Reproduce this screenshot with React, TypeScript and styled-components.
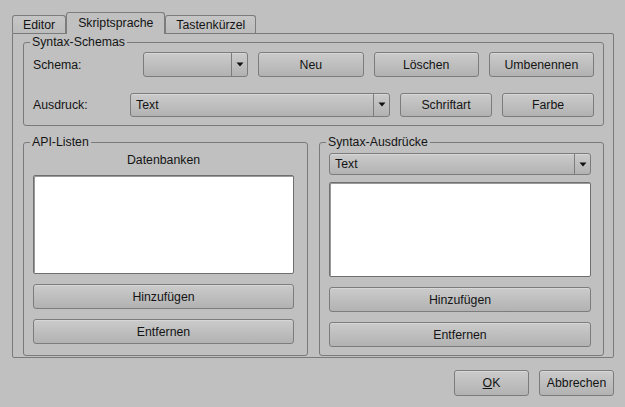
import React from 'react';
import styled, { createGlobalStyle, css } from 'styled-components';

const Global = createGlobalStyle`
  html, body { margin: 0; padding: 0; background: #c0c0c0; }
  body {
    font-family: "Liberation Sans", Arial, sans-serif;
    font-size: 12.3px;
    color: #141414;
  }
  #root { width: 625px; height: 407px; }
  * { box-sizing: border-box; }
`;

const Dialog = styled.div`
  width: 625px;
  height: 407px;
  padding: 12px 11px 0 12px;
  display: flex;
  flex-direction: column;
`;

const TabBar = styled.div`
  display: flex;
  align-items: flex-end;
  height: 21px;
  position: relative;
  z-index: 1;
`;

const Tab = styled.div<{ $active?: boolean }>`
  display: flex;
  align-items: center;
  justify-content: center;
  border: 1px solid #7c7c7c;
  border-bottom: none;
  border-radius: 3px 3px 0 0;
  white-space: nowrap;
  ${(p) =>
    p.$active
      ? css`
          height: 22px;
          margin-bottom: -1px;
          padding: 0 11px 2px;
          background: #c0c0c0;
        `
      : css`
          height: 18px;
          padding: 0 10px;
          background: linear-gradient(#c6c6c6, #bcbcbc);
        `}
`;

const Pane = styled.div`
  border: 1px solid #7a7a7a;
  border-radius: 0 2px 2px 2px;
  padding: 8px 9px 1px 10px;
  display: flex;
  flex-direction: column;
`;

const Group = styled.div`
  position: relative;
  border: 1px solid #7a7a7a;
  border-radius: 3px;
`;

const Legend = styled.span`
  position: absolute;
  top: -8px;
  left: 6px;
  padding: 0 2px;
  line-height: 14px;
  background: #c0c0c0;
  white-space: nowrap;
`;

const SchemaGroup = styled(Group)`
  padding: 9px 9px 8px 9px;
  display: flex;
  flex-direction: column;
  gap: 15px;
`;

const SchemaRow = styled.div`
  display: grid;
  grid-template-columns: 100px repeat(4, 1fr);
  column-gap: 10px;
  height: 25px;
  align-items: center;
`;

const StyleRow = styled.div`
  display: flex;
  align-items: center;
  height: 25px;
`;

const RowLabel = styled.span<{ $w?: number }>`
  ${(p) => p.$w && css`width: ${p.$w}px; flex: none;`}
  white-space: nowrap;
`;

const Button = styled.button<{ $w?: number }>`
  font: inherit;
  color: #141414;
  height: 25px;
  border: 1px solid #7c7c7c;
  border-radius: 3px;
  background: linear-gradient(#cbcbcb, #b2b2b2);
  box-shadow: inset 0 1px 0 rgba(255, 255, 255, 0.25);
  padding: 0;
  display: flex;
  align-items: center;
  justify-content: center;
  ${(p) => p.$w && css`width: ${p.$w}px; flex: none;`}
`;

const SideButton = styled(Button)`
  margin-left: 10px;
  height: 24px;
`;

const Combo = styled.div<{ $h?: number }>`
  display: flex;
  align-items: stretch;
  height: ${(p) => p.$h ?? 25}px;
  border: 1px solid #7c7c7c;
  border-radius: 3px;
  background: linear-gradient(#cbcbcb, #b2b2b2);
  box-shadow: inset 0 1px 0 rgba(255, 255, 255, 0.25);
  flex: 1;
  min-width: 0;
`;

const SectionCombo = styled(Combo)`
  flex: none;
  margin-bottom: 7px;
`;

const ComboText = styled.span`
  flex: 1;
  display: flex;
  align-items: center;
  padding-left: 5px;
`;

const ComboArrow = styled.span`
  width: 16px;
  flex: none;
  border-left: 1px solid #7c7c7c;
  display: flex;
  align-items: center;
  justify-content: center;
`;

const Lower = styled.div`
  display: grid;
  grid-template-columns: 1fr 1fr;
  column-gap: 11px;
  margin-top: 16px;
`;

const ListGroup = styled(Group)<{ $pt: number; $pr: number; $pb: number }>`
  display: flex;
  flex-direction: column;
  height: 214px;
  padding: ${(p) => `${p.$pt}px ${p.$pr}px ${p.$pb}px 9px`};
`;

const Caption = styled.div`
  text-align: center;
  line-height: 15px;
  margin-bottom: 7px;
`;

const ListBox = styled.div`
  flex: 1;
  background: #fff;
  border: 1px solid #6f6f6f;
  border-radius: 2px;
  box-shadow: inset 1px 1px 0 #9a9a9a;
`;

const ListButton = styled(Button)`
  margin-top: 10px;
  width: 100%;
`;

const Footer = styled.div`
  display: flex;
  justify-content: flex-end;
  gap: 10px;
  margin-top: 12px;
`;

const FooterButton = styled(Button)`
  width: 75px;
  height: 26px;
`;

const Arrow = () => (
  <svg width="8" height="5" viewBox="0 0 8 5">
    <path d="M0.5 0.5 H7.5 L4 4.5 Z" fill="#111" />
  </svg>
);

const ComboParts = ({ text }: { text: string }) => (
  <>
    <ComboText>{text}</ComboText>
    <ComboArrow>
      <Arrow />
    </ComboArrow>
  </>
);

export default function App() {
  return (
    <>
      <Global />
      <Dialog>
        <TabBar>
          <Tab>Editor</Tab>
          <Tab $active>Skriptsprache</Tab>
          <Tab>Tastenkürzel</Tab>
        </TabBar>
        <Pane>
          <SchemaGroup>
            <Legend>Syntax-Schemas</Legend>
            <SchemaRow>
              <RowLabel>Schema:</RowLabel>
              <Combo>
                <ComboParts text="" />
              </Combo>
              <Button>Neu</Button>
              <Button>Löschen</Button>
              <Button>Umbenennen</Button>
            </SchemaRow>
            <StyleRow>
              <RowLabel $w={97}>Ausdruck:</RowLabel>
              <Combo $h={24}>
                <ComboParts text="Text" />
              </Combo>
              <SideButton $w={92}>Schriftart</SideButton>
              <SideButton $w={92}>Farbe</SideButton>
            </StyleRow>
          </SchemaGroup>
          <Lower>
            <ListGroup $pt={10} $pr={13} $pb={11}>
              <Legend>API-Listen</Legend>
              <Caption>Datenbanken</Caption>
              <ListBox />
              <ListButton>Hinzufügen</ListButton>
              <ListButton>Entfernen</ListButton>
            </ListGroup>
            <ListGroup $pt={10} $pr={12} $pb={8}>
              <Legend>Syntax-Ausdrücke</Legend>
              <SectionCombo $h={22}>
                <ComboParts text="Text" />
              </SectionCombo>
              <ListBox />
              <ListButton>Hinzufügen</ListButton>
              <ListButton>Entfernen</ListButton>
            </ListGroup>
          </Lower>
        </Pane>
        <Footer>
          <FooterButton>
            <span>
              <u>O</u>K
            </span>
          </FooterButton>
          <FooterButton>Abbrechen</FooterButton>
        </Footer>
      </Dialog>
    </>
  );
}
